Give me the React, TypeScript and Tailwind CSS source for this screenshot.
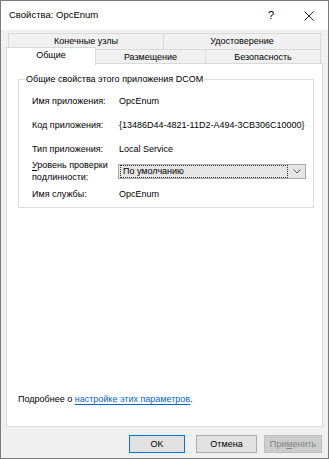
import React from "react";

const font = { fontFamily: '"Liberation Sans", Arial, sans-serif' };

function Row({ label, value, className }: { label: React.ReactNode; value: React.ReactNode; className?: string }) {
	return (
		<div className={"flex items-center leading-[12px] " + (className ?? "")}>
			<div className="w-[87px] shrink-0">{label}</div>
			<div className="flex-1">{value}</div>
		</div>
	);
}

export default function App() {
	return (
		<div
			className="w-[329px] h-[459px] flex flex-col border border-[#7a7a7a] bg-[#f0f0f0] text-[9px] text-black whitespace-nowrap"
			style={font}>
			{/* title bar */}
			<div className="h-[29px] bg-white flex items-center pl-[8px] pr-[13px] shrink-0">
				<span className="flex-1 text-[9.5px]">Свойства: OpcEnum</span>
				<span className="w-[12px] text-center text-[11px]">?</span>
				<span className="w-[12px] ml-[26px] flex justify-center">
					<svg width="10" height="10" viewBox="0 0 10 10" fill="none" stroke="#222" strokeWidth="1">
						<path d="M0.5 0.5 L9.5 9.5 M9.5 0.5 L0.5 9.5" />
					</svg>
				</span>
			</div>

			<div className="flex-1 flex flex-col px-[5px] pt-[3px]">
				{/* back tab row */}
				<div className="flex h-[16px] ml-[2px] mr-[2px] text-center leading-[15px]">
					<div className="w-[156px] border border-b-0 border-[#d9d9d9] bg-[#f0f0f0]">Конечные узлы</div>
					<div className="flex-1 border border-b-0 border-l-0 border-[#d9d9d9] bg-[#f0f0f0]">Удостоверение</div>
				</div>
				{/* front tab row */}
				<div className="flex h-[15px] mr-[2px] text-center leading-[14px] relative z-10">
					<div className="w-[90px] -mt-[2px] h-[18px] bg-white border border-b-0 border-[#d9d9d9] leading-[15px]">Общие</div>
					<div className="w-[110px] border border-l-0 border-[#d9d9d9] bg-[#f0f0f0]">Размещение</div>
					<div className="flex-1 border border-l-0 border-[#d9d9d9] bg-[#f0f0f0]">Безопасность</div>
				</div>

				{/* panel */}
				<div className="h-[364px] -mt-[1px] bg-white border border-[#d9d9d9] flex flex-col pl-[11px] pr-[8px] pt-[9px]">
					<fieldset className="border border-[#dcdcdc] pl-[13px] pr-[4px] h-[135px]">
						<legend className="ml-[-7px] px-[1px] leading-[12px]">Общие свойства этого приложения DCOM</legend>
						<Row className="mt-[10px]" label="Имя приложения:" value="OpcEnum" />
						<Row className="mt-[12px]" label="Код приложения:" value="{13486D44-4821-11D2-A494-3CB306C10000}" />
						<Row className="mt-[12px]" label="Тип приложения:" value="Local Service" />
						<div className="flex items-center mt-[4px]">
							<div className="w-[86px] shrink-0 leading-[12px]">
								<span className="underline underline-offset-2">У</span>ровень проверки
								<br />
								подлинности:
							</div>
							<div className="w-[188px] h-[15px] border border-[#adadad] bg-[#e5e5e5] flex items-center">
								<div className="flex-1 h-[13px] mx-[1px] border border-dotted border-[#333] bg-[#e5e5e5] leading-[11px] pl-[2px]">
									По умолчанию
								</div>
								<div className="w-[16px] flex justify-center">
									<svg width="8" height="5" viewBox="0 0 8 5" fill="none" stroke="#555" strokeWidth="1">
										<path d="M0.5 0.5 L4 4 L7.5 0.5" />
									</svg>
								</div>
							</div>
						</div>
						<Row className="mt-[5px]" label="Имя службы:" value="OpcEnum" />
					</fieldset>

					<div className="mt-auto mb-[20px]">
						Подробнее о{" "}
						<span className="text-[#0066cc] underline underline-offset-2">настройке этих параметров</span>.
					</div>
				</div>

				{/* buttons */}
				<div className="flex justify-end gap-[10px] pr-[1px] mt-[8px]">
					<button className="w-[56px] h-[18px] border border-[#0078d7] bg-[#e1e1e1] leading-[14px]">OK</button>
					<button className="w-[61px] h-[18px] border border-[#adadad] bg-[#e1e1e1] leading-[14px] ml-[1px]">Отмена</button>
					<button className="w-[58px] h-[18px] border border-[#bfbfbf] bg-[#cccccc] text-[#838383] leading-[14px] -ml-[3px]">
						При<span className="underline underline-offset-1">м</span>енить
					</button>
				</div>
			</div>
		</div>
	);
}
